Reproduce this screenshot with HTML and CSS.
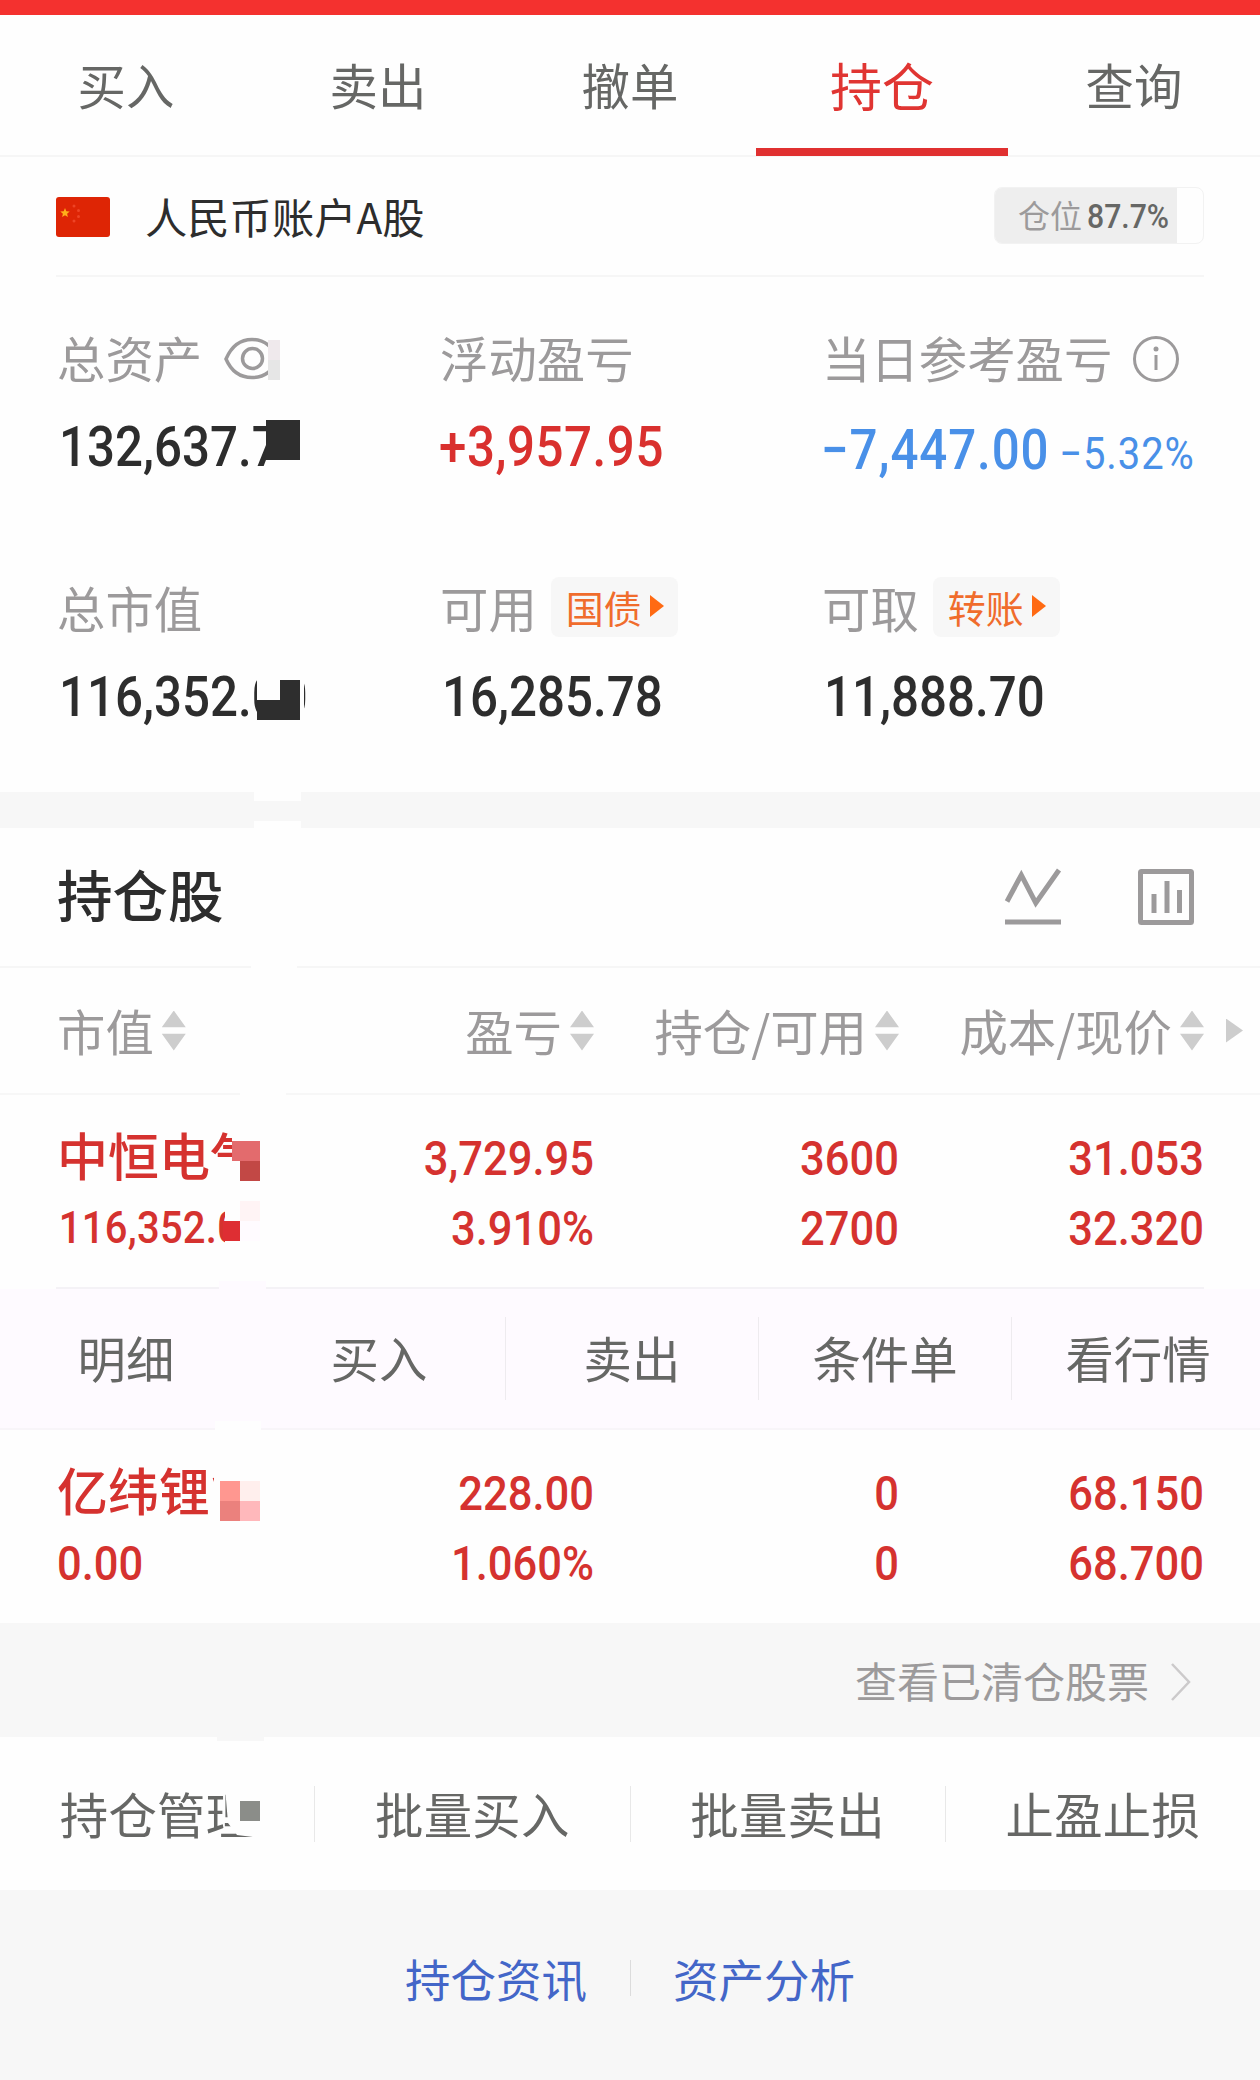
FILE: index.html
```html
<!DOCTYPE html>
<html lang="zh-CN">
<head>
    <meta charset="UTF-8">
    <meta name="viewport" content="width=device-width, initial-scale=1.0">
    <title>持仓</title>
    <link rel="stylesheet" href="styles.css">
</head>
<body>
    <div class="status-bar"></div>

    <nav class="tabs">
        <a class="tab">买入</a>
        <a class="tab">卖出</a>
        <a class="tab">撤单</a>
        <a class="tab active">持仓</a>
        <a class="tab">查询</a>
    </nav>

    <div class="account">
        <svg class="flag" width="54" height="40" viewBox="0 0 54 40">
            <rect width="54" height="40" rx="3" fill="#de2505"/>
            <path d="M9 11l1.300 3.200 3.400.3-2.600 2.200.8 3.400L9 18.300l-2.900 1.800.8-3.400-2.600-2.200 3.400-.3z" fill="#ffb01a"/>
            <g fill="#ee4426">
                <circle cx="18" cy="9" r="1.500"/>
                <circle cx="22.500" cy="13.500" r="1.500"/>
                <circle cx="22.500" cy="19.500" r="1.500"/>
                <circle cx="18" cy="24" r="1.500"/>
            </g>
        </svg>
        <span class="account-name">人民币账户A股</span>
        <div class="position">
            <div class="position-fill" style="width: 87.7%">仓位<b class="num">87.7%</b></div>
        </div>
    </div>

    <section class="stats">
        <div class="stat">
            <div class="label">总资产
                <svg class="eye" width="60" height="44" viewBox="0 0 60 44" fill="none" stroke="#9c9a9b" stroke-width="3.500">
                    <path d="M2 22C8 8 17 2.500 28 2.500S48 8 54 22C48 36 39 40.500 28 40.500S8 36 2 22z"/>
                    <circle cx="28.500" cy="21.500" r="10"/>
                </svg>
            </div>
            <div class="value num">132,637.70</div>
        </div>
        <div class="stat">
            <div class="label">浮动盈亏</div>
            <div class="value num red">+3,957.95</div>
        </div>
        <div class="stat">
            <div class="label">当日参考盈亏
                <svg class="info" width="48" height="48" viewBox="0 0 48 48" fill="none" stroke="#9c9a9b" stroke-width="3">
                    <circle cx="24" cy="24" r="21.500"/>
                    <path d="M24 20v15"/>
                    <circle cx="24" cy="14" r="2.500" fill="#9c9a9b" stroke="none"/>
                </svg>
            </div>
            <div class="value num blue">−7,447.00<small>−5.32%</small></div>
        </div>
        <div class="stat">
            <div class="label">总市值</div>
            <div class="value num">116,352.00</div>
        </div>
        <div class="stat">
            <div class="label">可用<span class="pill">国债<i class="play"></i></span></div>
            <div class="value num">16,285.78</div>
        </div>
        <div class="stat">
            <div class="label">可取<span class="pill">转账<i class="play"></i></span></div>
            <div class="value num">11,888.70</div>
        </div>

        <!-- privacy blocks -->
        <i class="mask m-eye"></i>
        <i class="mask m-asset"></i>
        <i class="mask m-value-bg"></i>
        <i class="mask m-value"></i>
    </section>

    <div class="band"><i class="mask m-band"></i></div>

    <div class="section-head">
        <h2>持仓股</h2>
        <svg width="58" height="60" viewBox="0 0 58 60" fill="none" stroke="#9c9a9b" stroke-width="5">
            <path d="M3 34.500L17.300 8l14.500 28L55 3M1 55h56"/>
        </svg>
        <svg width="58" height="60" viewBox="0 0 58 60" fill="none" stroke="#9c9a9b" stroke-width="5">
            <rect x="3.500" y="4.500" width="51" height="51" rx="1"/>
            <path d="M17 27v19M30 14v32M42.500 23v23"/>
        </svg>
        <i class="mask m-head"></i>
    </div>

    <div class="row cols">
        <span class="first">市值<i class="sort"></i></span>
        <span>盈亏<i class="sort"></i></span>
        <span>持仓/可用<i class="sort"></i></span>
        <span>成本/现价<i class="sort"></i></span>
        <i class="more"></i>
        <i class="mask m-cols"></i>
    </div>

    <div class="row holding">
        <div class="first">
            <div class="name">中恒电气</div>
            <div class="num amount">116,352.00</div>
        </div>
        <div class="num">3,729.95<br>3.910%</div>
        <div class="num">3600<br>2700</div>
        <div class="num">31.053<br>32.320</div>
        <i class="mask m-name1-bg"></i>
        <i class="mask m-name1"></i>
        <i class="mask m-amount1-bg"></i>
        <i class="mask m-amount1"></i>
    </div>

    <div class="actions">
        <a>明细</a>
        <a>买入</a>
        <a>卖出</a>
        <a>条件单</a>
        <a>看行情</a>
        <i class="mask m-act-top"></i>
        <i class="mask m-act-bottom"></i>
    </div>

    <div class="row holding last">
        <div class="first">
            <div class="name">亿纬锂能</div>
            <div class="num">0.00</div>
        </div>
        <div class="num">228.00<br>1.060%</div>
        <div class="num">0<br>0</div>
        <div class="num">68.150<br>68.700</div>
        <i class="mask m-name2-bg"></i>
        <i class="mask m-name2"></i>
    </div>

    <div class="closed">
        <span>查看已清仓股票</span>
        <svg width="22" height="40" viewBox="0 0 22 40" fill="none" stroke="#cccacb" stroke-width="2.500">
            <path d="M2 2l17 18L2 38"/>
        </svg>
        <i class="mask m-closed"></i>
    </div>

    <div class="tools">
        <a>持仓管理</a>
        <a>批量买入</a>
        <a>批量卖出</a>
        <a>止盈止损</a>
        <i class="mask m-tool-bg"></i>
        <i class="mask m-tool"></i>
    </div>

    <footer class="links">
        <a>持仓资讯</a>
        <a>资产分析</a>
    </footer>
</body>
</html>
```
FILE: styles.css
```css
* {
    margin: 0;
    padding: 0;
    box-sizing: border-box;
}

body {
    width: 1260px;
    height: 2080px;
    overflow: hidden;
    background: #f7f7f7;
    color: #2d2d2d;
    font-family: "Noto Sans CJK SC", sans-serif;
    font-size: 48.4px;
}

svg {
    display: block;
    flex: none;
}

/* condensed digits */
.num {
    font-family: Roboto, sans-serif;
    font-weight: 500;
    transform: scaleX(.888);
    transform-origin: 0 50%;
}

.red {
    color: #d9302e;
}

.blue {
    color: #4990e8;
}

.status-bar {
    height: 15px;
    background: #f4312f;
}

/* top tabs */
.tabs {
    display: flex;
    height: 142px;
    background: #fefefe;
    border-bottom: 2px solid #f6f6f6;
}

.tab {
    flex: 1;
    text-align: center;
    line-height: 139px;
    color: #666765;
}

.tab.active {
    height: 141px;
    border-bottom: 8px solid #e03030;
    color: #e03532;
    font-size: 52px;
}

/* account line */
.account {
    display: flex;
    align-items: center;
    height: 120px;
    padding: 0 56px;
    background: linear-gradient(#f6f6f6, #f6f6f6) 56px 118px / 1148px 2px no-repeat #fefefe;
}

.account-name {
    margin-left: 35px;
    flex: 1;
    font-size: 42.3px;
    line-height: 60px;
    padding-bottom: 3px;
}

.position {
    width: 210px;
    height: 57px;
    margin-bottom: 4px;
    border: 1px solid #f2f2f2;
    border-radius: 8px;
    overflow: hidden;
}

.position-fill {
    display: flex;
    height: 100%;
    padding-left: 23px;
    background: #eee;
    color: #9c9a9b;
    font-size: 32px;
    line-height: 53px;
    white-space: nowrap;
}

.position-fill .num {
    margin-left: 5px;
    color: #666765;
    font-size: 34px;
    line-height: 57px;
}

/* asset figures */
.stats {
    position: relative;
    display: grid;
    grid-template-columns: 383px 382px 1fr;
    grid-auto-rows: 250px;
    height: 515px;
    padding: 50px 0 0 57px;
    background: #fefefe;
}

.label {
    display: flex;
    height: 60px;
    line-height: 60px;
    color: #9c9a9b;
}

.eye {
    margin: 10px 0 0 22px;
}

.info {
    margin: 8px 0 0 20px;
}

.value {
    margin: 29px 0 0 2px;
    font-size: 55.5px;
    line-height: 64px;
    white-space: nowrap;
}

.value.red {
    margin-left: -1px;
    letter-spacing: .6px;
}

.value.blue {
    margin-top: 32px;
    margin-left: -1px;
    letter-spacing: 1px;
}

.value small {
    margin-left: 11px;
    font-size: 45px;
    font-weight: 400;
}

.pill {
    display: flex;
    align-items: center;
    width: 127px;
    height: 60px;
    margin-left: 14px;
    padding-left: 15px;
    border-radius: 8px;
    background: #f7f7f7;
    color: #f06c2c;
    font-size: 38px;
}

.play {
    margin: 0 0 2px 8px;
    border-left: 14px solid #ff6a13;
    border-top: 11px solid transparent;
    border-bottom: 11px solid transparent;
}

.band {
    position: relative;
    height: 36px;
}

/* holdings */
.section-head {
    position: relative;
    display: flex;
    align-items: center;
    gap: 75px;
    height: 140px;
    padding: 0 65px 0 57px;
    background: #fefefe;
    border-bottom: 2px solid #f6f6f6;
}

.section-head h2 {
    flex: 1;
    padding-bottom: 9px;
    font-size: 55.5px;
    font-weight: 500;
    line-height: 70px;
}

.row {
    position: relative;
    display: grid;
    grid-template-columns: 231px 306px 305px 305px 56px;
    padding-left: 57px;
    background: #fefefe;
    text-align: right;
}

.row .first {
    justify-content: flex-start;
    text-align: left;
}

.cols {
    height: 127px;
    border-bottom: 2px solid #f7f7f7;
    color: #9c9a9b;
}

.cols span {
    display: flex;
    align-items: center;
    justify-content: flex-end;
    line-height: 123px;
    white-space: nowrap;
}

.sort {
    flex: none;
    width: 24px;
    height: 40px;
    margin-left: 8px;
    background: #cdcdcd;
    clip-path: polygon(50% 0, 100% 42%, 0 42%, 0 58%, 100% 58%, 50% 100%, 0 58%, 0 42%);
}

.more {
    align-self: center;
    width: 17px;
    height: 24px;
    margin-left: 22px;
    background: #cdcdcd;
    clip-path: polygon(0 0, 100% 50%, 0 100%);
}

.holding {
    height: 194px;
    padding-top: 27px;
    background: linear-gradient(#f4f2f6, #f4f2f6) 56px 192px / 1148px 2px no-repeat #fefefe;
    color: #d5322f;
    line-height: 70px;
}

.holding.last {
    height: 193px;
    background: #fefefe;
}

.holding .num {
    padding-top: 2px;
    font-size: 49px;
    transform-origin: 100% 50%;
}

.holding .first .num {
    transform-origin: 0 50%;
}

.holding .amount {
    padding-left: 2px;
    font-size: 45px;
    line-height: 68px;
    letter-spacing: .3px;
}

.name {
    height: 70px;
    font-size: 51px;
    font-weight: 500;
    line-height: 64px;
    white-space: nowrap;
}

.actions {
    position: relative;
    display: flex;
    align-items: center;
    height: 141px;
    background: #fefaff;
    border-bottom: 2px solid #f8f5f9;
}

.actions a {
    flex: 0 0 253px;
    height: 83px;
    border-right: 1px solid #eeebef;
    color: #666765;
    line-height: 81px;
    text-align: center;
}

.actions a:first-child,
.actions a:nth-child(5) {
    border-color: transparent;
}

.closed {
    position: relative;
    display: flex;
    align-items: center;
    justify-content: flex-end;
    gap: 21px;
    height: 114px;
    padding-right: 68px;
    color: #9c9a9b;
    font-size: 42px;
}

.closed span {
    padding-bottom: 1px;
}

.closed svg {
    margin-top: 3px;
}

.tools {
    position: relative;
    display: flex;
    align-items: center;
    height: 153px;
    background: #fefefe;
}

.tools a {
    flex: 1;
    height: 56px;
    color: #666765;
    line-height: 54px;
    text-align: center;
    letter-spacing: .3px;
}

.tools a + a {
    border-left: 1px solid #e8e8e8;
}

.links {
    display: flex;
    justify-content: center;
    align-items: center;
    height: 175px;
}

.links a {
    padding: 0 43px 0 44px;
    color: #4366c8;
    font-size: 45.500px;
    line-height: 36px;
}

.links a + a {
    padding: 0 44px 0 42px;
    border-left: 1px solid #dcdcdc;
}

/* privacy blocks laid over figures and names */
.mask {
    position: absolute;
}

.m-eye {
    left: 268px;
    top: 61px;
    width: 18px;
    height: 44px;
    background: linear-gradient(#efe9ec 50%, #e6e6e6 50%) 0 2px / 12px 40px no-repeat #fefefe;
}

.m-asset {
    left: 266px;
    top: 140px;
    width: 54px;
    height: 55px;
    background: linear-gradient(#2e2e2e, #2e2e2e) 0 3px / 34px 40px no-repeat #fefefe;
}

.m-value-bg {
    left: 257px;
    top: 390px;
    width: 47px;
    height: 55px;
    background: #fefefe;
}

.m-value {
    left: 257px;
    top: 403px;
    width: 43px;
    height: 40px;
    background: #2e2e2e;
    clip-path: polygon(23px 0, 100% 0, 100% 100%, 0 100%, 0 50%, 23px 50%);
}

.m-band {
    left: 254px;
    top: 0;
    width: 47px;
    height: 36px;
    background: linear-gradient(#fefefe 9px, #f7f7f7 9px, #f7f7f7 29px, #fefefe 29px);
}

.m-head {
    left: 251px;
    top: 136px;
    width: 46px;
    height: 6px;
    background: #fefefe;
}

.m-cols {
    left: 240px;
    top: 123px;
    width: 46px;
    height: 6px;
    background: #fefefe;
}

.m-name1-bg {
    left: 214px;
    top: 66px;
    width: 60px;
    height: 24px;
    background: #fefefe;
}

.m-name1 {
    left: 232px;
    top: 34px;
    width: 32px;
    height: 52px;
    background:
        linear-gradient(#e36b6d, #e36b6d) 0 12px / 28px 20px no-repeat,
        linear-gradient(#c24845, #c24845) 8px 32px / 20px 20px no-repeat,
        #fefefe;
}

.m-amount1-bg {
    left: 225px;
    top: 106px;
    width: 60px;
    height: 46px;
    background: #fefefe;
}

.m-amount1 {
    left: 223px;
    top: 106px;
    width: 37px;
    height: 40px;
    background:
        linear-gradient(#fff4f5 50%, #fffbff 50%) 17px 0 / 20px 40px no-repeat,
        linear-gradient(#de2e33, #de2e33) 0 20px / 17px 20px no-repeat;
}

.m-act-top {
    left: 219px;
    top: -8px;
    width: 47px;
    height: 9px;
    background: #fefaff;
}

.m-act-bottom {
    left: 215px;
    top: 132px;
    width: 46px;
    height: 9px;
    background: #fefefe;
}

.m-name2-bg {
    left: 214px;
    top: 34px;
    width: 56px;
    height: 60px;
    background: #fefefe;
}

.m-name2 {
    left: 220px;
    top: 51px;
    width: 40px;
    height: 40px;
    background:
        linear-gradient(#ff9790 50%, #eb817d 50%) 0 0 / 20px 40px no-repeat,
        linear-gradient(#ffefed 50%, #ffb8bb 50%) 20px 0 / 20px 40px no-repeat;
}

.m-closed {
    left: 217px;
    top: 113px;
    width: 47px;
    height: 5px;
    background: #f7f7f7;
    z-index: 1;
}

.m-tool-bg {
    left: 225px;
    top: 50px;
    width: 40px;
    height: 54px;
    background: #fefefe;
    clip-path: polygon(0 0, 100% 0, 100% 100%, 28px 50px, 12px 48px, 3px 36px);
}

.m-tool {
    left: 240px;
    top: 64px;
    width: 20px;
    height: 20px;
    background: #8b8d89;
}
```
